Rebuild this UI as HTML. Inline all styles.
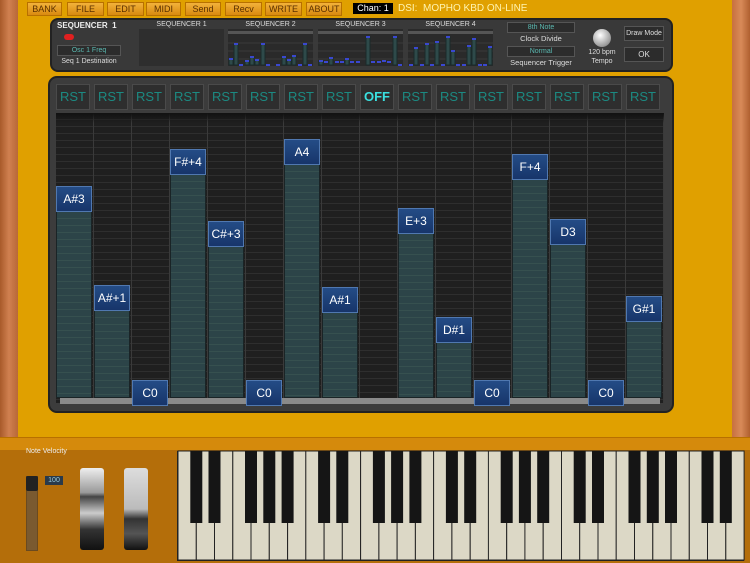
<!DOCTYPE html>
<html><head><meta charset="utf-8"><style>
*{margin:0;padding:0;box-sizing:border-box}
body{width:750px;height:563px;overflow:hidden;background:#e0a000;font-family:"Liberation Sans",sans-serif;position:relative}
.a{position:absolute}
.mb{position:absolute;top:2px;height:14px;background:linear-gradient(#f2b23a,#d98a10);border:1px solid #b87000;color:#5a3000;font-size:9px;text-align:center;line-height:12px}
.rst{position:absolute;top:84px;width:34px;height:26px;background:#2e2e2e;border:1px solid #4a4a4a;color:#1c8a82;font-size:13px;text-align:center;line-height:24px}
.bar{position:absolute;width:36px;background:repeating-linear-gradient(#2c4448 0 6px,#36504f 6px 7px);border:1px solid #1a2426}
.nb{position:absolute;width:36px;height:26px;background:linear-gradient(#244c86,#17356a);border:1px solid #5078b0;color:#fff;font-size:12px;text-align:center;line-height:24px}
.lbl{position:absolute;color:#ddd;font-size:7px;text-align:center}
.box{position:absolute;background:#2c2c2c;border:1px solid #555;color:#5ab8b0;font-size:7px;text-align:center;line-height:9px}
</style></head><body>
<div class="a" style="left:0;top:0;width:18px;height:440px;background:linear-gradient(90deg,#a85a2a,#d08050,#b86838)"></div>
<div class="a" style="left:732px;top:0;width:18px;height:440px;background:linear-gradient(90deg,#c87040,#d88a58,#b06030)"></div>
<div class="mb" style="left:27px;width:35px">BANK</div>
<div class="mb" style="left:67px;width:37px">FILE</div>
<div class="mb" style="left:107px;width:37px">EDIT</div>
<div class="mb" style="left:146px;width:35px">MIDI</div>
<div class="mb" style="left:185px;width:36px">Send</div>
<div class="mb" style="left:225px;width:37px">Recv</div>
<div class="mb" style="left:265px;width:37px">WRITE</div>
<div class="mb" style="left:306px;width:36px">ABOUT</div>
<div class="a" style="left:353px;top:3px;width:40px;height:11px;background:#000;color:#fff;font-size:9px;line-height:11px;text-align:center">Chan: 1</div>
<div class="a" style="left:398px;top:2px;color:#fff4b0;font-size:10px;line-height:13px">DSI:&nbsp; MOPHO KBD ON-LINE</div>

<div class="a" style="left:50px;top:18px;width:623px;height:54px;background:#393939;border:2px solid #222;border-radius:8px"></div>
<div class="a" style="left:57px;top:21px;color:#eee;font-size:8px;font-weight:bold">SEQUENCER&nbsp; 1</div>
<div class="a" style="left:64px;top:34px;width:10px;height:6px;background:#e02020;border-radius:3px"></div>
<div class="box" style="left:57px;top:45px;width:64px;height:11px">Osc 1 Freq</div>
<div class="lbl" style="left:55px;top:58px;width:68px">Seq 1 Destination</div>
<div class="lbl" style="left:139px;top:21px;width:85px">SEQUENCER 1</div>
<div class="lbl" style="left:228px;top:21px;width:85px">SEQUENCER 2</div>
<div class="lbl" style="left:318px;top:21px;width:85px">SEQUENCER 3</div>
<div class="lbl" style="left:408px;top:21px;width:85px">SEQUENCER 4</div>
<div class="a" style="left:139px;top:29px;width:85px;height:37px;background:#2e2e2e"></div>
<svg class="a" style="left:228px;top:29px" width="266" height="38">
<rect x="0" y="0" width="85" height="37" fill="#2a2a2a"/><rect x="90" y="0" width="85" height="37" fill="#2a2a2a"/><rect x="180" y="0" width="85" height="37" fill="#2a2a2a"/>
<g fill="#555"><rect x="0" y="2" width="85" height="3"/><rect x="90" y="2" width="85" height="3"/><rect x="180" y="2" width="85" height="3"/></g>
<g stroke="#3a3a3a" stroke-width="1"><line x1="0" y1="14" x2="265" y2="14"/><line x1="0" y1="22" x2="265" y2="22"/><line x1="0" y1="30" x2="265" y2="30"/></g>
<g fill="#2e4a4a" stroke="#1a2a2a">
<rect x="1" y="30" width="4" height="6"/><rect x="6" y="15" width="4" height="21"/><rect x="17" y="32" width="4" height="4"/><rect x="22" y="28" width="4" height="8"/><rect x="27" y="31" width="4" height="5"/><rect x="33" y="15" width="4" height="21"/><rect x="54" y="28" width="4" height="8"/><rect x="59" y="31" width="4" height="5"/><rect x="64" y="27" width="4" height="9"/><rect x="75" y="15" width="4" height="21"/>
<rect x="91" y="32" width="4" height="4"/><rect x="101" y="29" width="4" height="7"/><rect x="117" y="30" width="4" height="6"/><rect x="138" y="8" width="4" height="28"/><rect x="165" y="8" width="4" height="28"/>
<rect x="186" y="19" width="4" height="17"/><rect x="197" y="15" width="4" height="21"/><rect x="207" y="13" width="4" height="23"/><rect x="218" y="8" width="4" height="28"/><rect x="223" y="22" width="4" height="14"/><rect x="239" y="17" width="4" height="19"/><rect x="244" y="10" width="4" height="26"/><rect x="260" y="18" width="4" height="18"/>
</g>
<g fill="#3a48d0">
<rect x="1" y="29" width="4" height="2"/><rect x="6" y="14" width="4" height="2"/><rect x="11" y="35" width="4" height="2"/><rect x="17" y="31" width="4" height="2"/><rect x="22" y="27" width="4" height="2"/><rect x="27" y="30" width="4" height="2"/><rect x="33" y="14" width="4" height="2"/><rect x="38" y="35" width="4" height="2"/><rect x="48" y="35" width="4" height="2"/><rect x="54" y="27" width="4" height="2"/><rect x="59" y="30" width="4" height="2"/><rect x="64" y="26" width="4" height="2"/><rect x="70" y="35" width="4" height="2"/><rect x="75" y="14" width="4" height="2"/><rect x="80" y="35" width="4" height="2"/>
<rect x="91" y="31" width="4" height="2"/><rect x="96" y="32" width="4" height="2"/><rect x="101" y="28" width="4" height="2"/><rect x="107" y="32" width="4" height="2"/><rect x="112" y="32" width="4" height="2"/><rect x="117" y="29" width="4" height="2"/><rect x="122" y="32" width="4" height="2"/><rect x="128" y="32" width="4" height="2"/><rect x="138" y="7" width="4" height="2"/><rect x="143" y="32" width="4" height="2"/><rect x="149" y="32" width="4" height="2"/><rect x="154" y="31" width="4" height="2"/><rect x="159" y="32" width="4" height="2"/><rect x="165" y="7" width="4" height="2"/><rect x="170" y="35" width="4" height="2"/>
<rect x="181" y="35" width="4" height="2"/><rect x="186" y="18" width="4" height="2"/><rect x="192" y="35" width="4" height="2"/><rect x="197" y="14" width="4" height="2"/><rect x="202" y="35" width="4" height="2"/><rect x="207" y="12" width="4" height="2"/><rect x="213" y="35" width="4" height="2"/><rect x="218" y="7" width="4" height="2"/><rect x="223" y="21" width="4" height="2"/><rect x="228" y="35" width="4" height="2"/><rect x="234" y="35" width="4" height="2"/><rect x="239" y="16" width="4" height="2"/><rect x="244" y="9" width="4" height="2"/><rect x="250" y="35" width="4" height="2"/><rect x="255" y="35" width="4" height="2"/><rect x="260" y="17" width="4" height="2"/>
</g></svg>
<div class="box" style="left:507px;top:22px;width:68px;height:11px">8th Note</div>
<div class="lbl" style="left:500px;top:34px;width:82px;font-size:7.5px">Clock Divide</div>
<div class="box" style="left:507px;top:46px;width:68px;height:11px">Normal</div>
<div class="lbl" style="left:500px;top:58px;width:82px;font-size:7.5px">Sequencer Trigger</div>
<div class="a" style="left:593px;top:29px;width:18px;height:18px;border-radius:50%;background:radial-gradient(circle at 40% 35%,#fff,#999 70%,#555)"></div>
<div class="lbl" style="left:582px;top:49px;width:40px">120 bpm</div>
<div class="lbl" style="left:582px;top:58px;width:40px">Tempo</div>
<div class="a" style="left:624px;top:26px;width:40px;height:15px;background:#2c2c2c;border:1px solid #555;color:#ddd;font-size:7px;text-align:center;line-height:13px">Draw Mode</div>
<div class="a" style="left:624px;top:47px;width:40px;height:15px;background:#2c2c2c;border:1px solid #555;color:#ddd;font-size:8px;text-align:center;line-height:13px">OK</div>

<div class="a" style="left:48px;top:76px;width:626px;height:337px;background:#3c3c3c;border:2px solid #222;border-radius:9px"></div>
<div class="rst" style="left:56px">RST</div><div class="rst" style="left:94px">RST</div><div class="rst" style="left:132px">RST</div><div class="rst" style="left:170px">RST</div><div class="rst" style="left:208px">RST</div><div class="rst" style="left:246px">RST</div><div class="rst" style="left:284px">RST</div><div class="rst" style="left:322px">RST</div>
<div class="rst" style="left:360px;color:#3ae0e0;font-weight:bold">OFF</div>
<div class="rst" style="left:398px">RST</div><div class="rst" style="left:436px">RST</div><div class="rst" style="left:474px">RST</div><div class="rst" style="left:512px">RST</div><div class="rst" style="left:550px">RST</div><div class="rst" style="left:588px">RST</div><div class="rst" style="left:626px">RST</div>
<div class="a" style="left:56px;top:113px;width:608px;height:290px;background:repeating-linear-gradient(90deg,transparent 0 37px,#3a3a3a 37px 38px),repeating-linear-gradient(#1f1f1f 0 6px,#2e2e2e 6px 7px)"></div>
<div class="a" style="left:56px;top:113px;width:608px;height:10px;background:linear-gradient(#111,rgba(20,20,20,0))"></div>
<div class="a" style="left:60px;top:398px;width:600px;height:6px;background:#8a8a8a"></div>

<div class="bar" style="left:56px;top:211px;height:187px"></div>
<div class="bar" style="left:94px;top:310px;height:88px"></div>
<div class="bar" style="left:170px;top:174px;height:224px"></div>
<div class="bar" style="left:208px;top:246px;height:152px"></div>
<div class="bar" style="left:284px;top:164px;height:234px"></div>
<div class="bar" style="left:322px;top:312px;height:86px"></div>
<div class="bar" style="left:398px;top:233px;height:165px"></div>
<div class="bar" style="left:436px;top:342px;height:56px"></div>
<div class="bar" style="left:512px;top:179px;height:219px"></div>
<div class="bar" style="left:550px;top:244px;height:154px"></div>
<div class="bar" style="left:626px;top:321px;height:77px"></div>

<div class="nb" style="left:56px;top:186px">A#3</div>
<div class="nb" style="left:94px;top:285px">A#+1</div>
<div class="nb" style="left:132px;top:380px">C0</div>
<div class="nb" style="left:170px;top:149px">F#+4</div>
<div class="nb" style="left:208px;top:221px">C#+3</div>
<div class="nb" style="left:246px;top:380px">C0</div>
<div class="nb" style="left:284px;top:139px">A4</div>
<div class="nb" style="left:322px;top:287px">A#1</div>
<div class="nb" style="left:398px;top:208px">E+3</div>
<div class="nb" style="left:436px;top:317px">D#1</div>
<div class="nb" style="left:474px;top:380px">C0</div>
<div class="nb" style="left:512px;top:154px">F+4</div>
<div class="nb" style="left:550px;top:219px">D3</div>
<div class="nb" style="left:588px;top:380px">C0</div>
<div class="nb" style="left:626px;top:296px">G#1</div>

<div class="a" style="left:0;top:437px;width:750px;height:13px;background:#d58a0c;border-top:1px solid #b87000"></div>
<div class="a" style="left:0;top:450px;width:750px;height:113px;background:#b46e0a"></div>
<div class="a" style="left:26px;top:448px;color:#eee;font-size:7px">Note Velocity</div>
<div class="a" style="left:45px;top:476px;width:18px;height:9px;background:#2a3a4a;color:#9cd;font-size:7px;text-align:center;line-height:9px">100</div>
<div class="a" style="left:26px;top:476px;width:12px;height:75px;background:#7a5a30;border:1px solid #6a4a20"></div>
<div class="a" style="left:26px;top:476px;width:12px;height:15px;background:#222;border-radius:2px"></div>
<div class="a" style="left:80px;top:468px;width:24px;height:82px;border-radius:3px;background:linear-gradient(#eee,#999 30%,#444 35%,#ccc 55%,#333 75%,#111)"></div>
<div class="a" style="left:124px;top:468px;width:24px;height:82px;border-radius:3px;background:linear-gradient(#ddd,#bbb 50%,#333 62%,#555 80%,#111)"></div>

<svg class="a" style="left:0;top:0" width="750" height="563">
<rect x="177" y="451" width="567" height="110" fill="#222"/>
<g fill="#dcd8c6" stroke="#222" stroke-width="1">
<rect x="178" y="451" width="18.3" height="109"/><rect x="196.3" y="451" width="18.3" height="109"/><rect x="214.5" y="451" width="18.3" height="109"/><rect x="232.8" y="451" width="18.3" height="109"/><rect x="251" y="451" width="18.3" height="109"/><rect x="269.3" y="451" width="18.3" height="109"/><rect x="287.6" y="451" width="18.3" height="109"/><rect x="305.8" y="451" width="18.3" height="109"/><rect x="324.1" y="451" width="18.3" height="109"/><rect x="342.3" y="451" width="18.3" height="109"/><rect x="360.6" y="451" width="18.3" height="109"/><rect x="378.9" y="451" width="18.3" height="109"/><rect x="397.1" y="451" width="18.3" height="109"/><rect x="415.4" y="451" width="18.3" height="109"/><rect x="433.6" y="451" width="18.3" height="109"/><rect x="451.9" y="451" width="18.3" height="109"/><rect x="470.2" y="451" width="18.3" height="109"/><rect x="488.4" y="451" width="18.3" height="109"/><rect x="506.7" y="451" width="18.3" height="109"/><rect x="524.9" y="451" width="18.3" height="109"/><rect x="543.2" y="451" width="18.3" height="109"/><rect x="561.5" y="451" width="18.3" height="109"/><rect x="579.7" y="451" width="18.3" height="109"/><rect x="598" y="451" width="18.3" height="109"/><rect x="616.2" y="451" width="18.3" height="109"/><rect x="634.5" y="451" width="18.3" height="109"/><rect x="652.8" y="451" width="18.3" height="109"/><rect x="671" y="451" width="18.3" height="109"/><rect x="689.3" y="451" width="18.3" height="109"/><rect x="707.5" y="451" width="18.3" height="109"/><rect x="725.8" y="451" width="18.3" height="109"/>
</g>
<g fill="#151515">
<rect x="190.3" y="451" width="12" height="72"/><rect x="208.5" y="451" width="12" height="72"/><rect x="245" y="451" width="12" height="72"/><rect x="263.3" y="451" width="12" height="72"/><rect x="281.6" y="451" width="12" height="72"/><rect x="318.1" y="451" width="12" height="72"/><rect x="336.3" y="451" width="12" height="72"/><rect x="372.9" y="451" width="12" height="72"/><rect x="391.1" y="451" width="12" height="72"/><rect x="409.4" y="451" width="12" height="72"/><rect x="445.9" y="451" width="12" height="72"/><rect x="464.2" y="451" width="12" height="72"/><rect x="500.7" y="451" width="12" height="72"/><rect x="518.9" y="451" width="12" height="72"/><rect x="537.2" y="451" width="12" height="72"/><rect x="573.7" y="451" width="12" height="72"/><rect x="592" y="451" width="12" height="72"/><rect x="628.5" y="451" width="12" height="72"/><rect x="646.8" y="451" width="12" height="72"/><rect x="665" y="451" width="12" height="72"/><rect x="701.5" y="451" width="12" height="72"/><rect x="719.8" y="451" width="12" height="72"/>
</g>
</svg>
</body></html>
